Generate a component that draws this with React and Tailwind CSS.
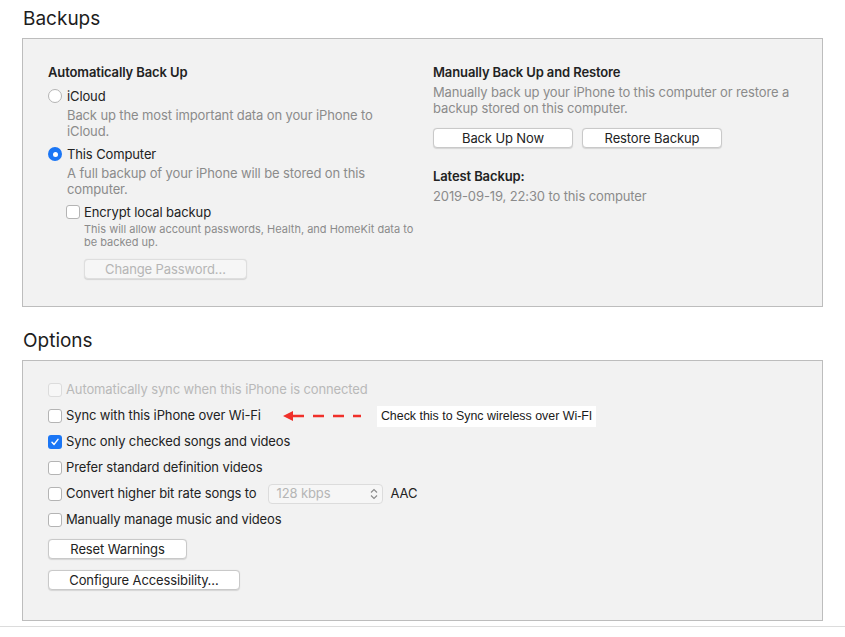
import { Fragment } from 'react';

function Radio({ checked }) {
  if (checked) {
    return (
      <span className="w-[14px] h-[14px] rounded-full bg-[#1b76f5] flex items-center justify-center shrink-0">
        <span className="w-[5px] h-[5px] rounded-full bg-white" />
      </span>
    );
  }
  return <span className="w-[14px] h-[14px] rounded-full bg-white border border-[#b4b4b4] shrink-0" />;
}

function Check({ checked, disabled }) {
  if (checked) {
    return (
      <span className="w-[14px] h-[14px] rounded-[3px] bg-[#1b76f5] flex items-center justify-center shrink-0">
        <svg width="10" height="10" viewBox="0 0 10 10">
          <path d="M2 5.2 L4.1 7.4 L8 2.4" fill="none" stroke="white" strokeWidth="1.5" strokeLinecap="round" strokeLinejoin="round" />
        </svg>
      </span>
    );
  }
  return (
    <span
      className={
        disabled
          ? 'w-[14px] h-[14px] rounded-[3px] bg-[#f7f7f7] border border-[#dcdcdc] shrink-0'
          : 'w-[14px] h-[14px] rounded-[3px] bg-white border border-[#b4b4b4] shrink-0'
      }
    />
  );
}

function Button({ children, className = '', disabled }) {
  return (
    <button
      className={
        'h-[20px] rounded-[4px] border text-[13px] leading-none flex items-center justify-center shadow-[0_0.5px_1px_rgba(0,0,0,0.12)] ' +
        (disabled ? 'bg-[#f6f6f6] border-[#dedede] text-[#b5b5b5] ' : 'bg-white border-[#c9c9c9] text-[#222] ') +
        className
      }
    >
      {children}
    </button>
  );
}

const options = [
  { label: 'Automatically sync when this iPhone is connected', disabled: true },
  { label: 'Sync with this iPhone over Wi-Fi', note: true },
  { label: 'Sync only checked songs and videos', checked: true },
  { label: 'Prefer standard definition videos' },
  { label: 'Convert higher bit rate songs to', select: true },
  { label: 'Manually manage music and videos' },
];

export default function App() {
  return (
    <div
      className="w-[845px] h-[637px] bg-white text-[#222] overflow-hidden tracking-[-0.12px]"
      style={{ fontFamily: "Inter, 'Noto Sans', sans-serif" }}
    >
      <div className="px-[22px]">
        <h1 className="h-[38px] flex items-center pl-[1px] text-[19px] tracking-normal text-[#1d1d1d]">Backups</h1>

        <div className="h-[269px] bg-[#f2f2f2] border border-[#bdbdbd] pl-[25px] pt-[25px] flex">
          <div className="w-[385px] text-[13px]">
            <p className="font-semibold leading-[16px]">Automatically Back Up</p>

            <div className="flex items-center gap-[5px] mt-[8px] leading-[16px]">
              <Radio />
              <span>iCloud</span>
            </div>
            <p className="ml-[19px] mt-[3px] leading-[16px] text-[#8b8b8b] w-[330px]">
              Back up the most important data on your iPhone to iCloud.
            </p>

            <div className="flex items-center gap-[5px] mt-[7px] leading-[16px]">
              <Radio checked />
              <span>This Computer</span>
            </div>
            <p className="ml-[19px] mt-[3px] leading-[16px] text-[#8b8b8b] w-[330px]">
              A full backup of your iPhone will be stored on this computer.
            </p>

            <div className="ml-[18px] mt-[7px] flex items-center gap-[4px] leading-[16px]">
              <Check />
              <span>Encrypt local backup</span>
            </div>
            <p className="ml-[36px] mt-[3px] text-[11px] tracking-normal leading-[13px] text-[#8b8b8b] w-[340px]">
              This will allow account passwords, Health, and HomeKit data to be backed up.
            </p>
            <Button disabled className="ml-[36px] mt-[10px] w-[163px]">Change Password…</Button>
          </div>

          <div className="text-[13px]">
            <p className="font-semibold leading-[16px]">Manually Back Up and Restore</p>
            <p className="mt-[4px] leading-[16px] text-[#8b8b8b] w-[370px]">
              Manually back up your iPhone to this computer or restore a backup stored on this computer.
            </p>
            <div className="flex gap-[9px] mt-[12px]">
              <Button className="w-[140px]">Back Up Now</Button>
              <Button className="w-[140px]">Restore Backup</Button>
            </div>
            <p className="font-semibold leading-[16px] mt-[20px]">Latest Backup:</p>
            <p className="mt-[4px] leading-[16px] text-[#8b8b8b]">2019-09-19, 22:30 to this computer</p>
          </div>
        </div>

        <h2 className="h-[38px] mt-[15px] flex items-center pl-[1px] text-[19px] tracking-normal text-[#1d1d1d]">Options</h2>

        <div className="h-[261px] bg-[#f2f2f2] border border-[#bdbdbd] pl-[25px] pt-[16px] text-[13px]">
          {options.map((o) => (
            <div key={o.label} className="h-[26px] flex items-center gap-[4px]">
              <Check checked={o.checked} disabled={o.disabled} />
              <span className={o.disabled ? 'text-[#b9b9b9]' : ''}>{o.label}</span>
              {o.note && (
                <Fragment>
                  <svg width="80" height="12" viewBox="0 0 80 12" className="ml-[18px]">
                    <path d="M0 6 L10 1 L10 11 Z" fill="#f0302a" />
                    <path d="M10 6 H78" stroke="#f0302a" strokeWidth="2.5" strokeDasharray="11 9" />
                  </svg>
                  <span
                    className="ml-[10px] bg-white px-[4px] h-[21px] flex items-center text-[12.4px] tracking-normal text-[#1a1a1a]"
                    style={{ fontFamily: "'Liberation Sans', Arial, sans-serif" }}
                  >
                    Check this to Sync wireless over Wi-FI
                  </span>
                </Fragment>
              )}
              {o.select && (
                <Fragment>
                  <span className="ml-[7px] w-[115px] h-[20px] rounded-[4px] border border-[#dcdcdc] bg-[#f6f6f6] flex items-center justify-between pl-[8px] pr-[4px] text-[#b5b5b5]">
                    128 kbps
                    <svg width="8" height="12" viewBox="0 0 8 12">
                      <path d="M1 4.5 L4 1.5 L7 4.5 M1 7.5 L4 10.5 L7 7.5" fill="none" stroke="#8a8a8a" strokeWidth="1.1" />
                    </svg>
                  </span>
                  <span className="ml-[4px]">AAC</span>
                </Fragment>
              )}
            </div>
          ))}
          <Button className="w-[139px] mt-[6px]">Reset Warnings</Button>
          <Button className="w-[192px] mt-[11px]">Configure Accessibility…</Button>
        </div>
      </div>
      <div className="mt-[5px] border-t border-[#dcdcdc]" />
    </div>
  );
}
